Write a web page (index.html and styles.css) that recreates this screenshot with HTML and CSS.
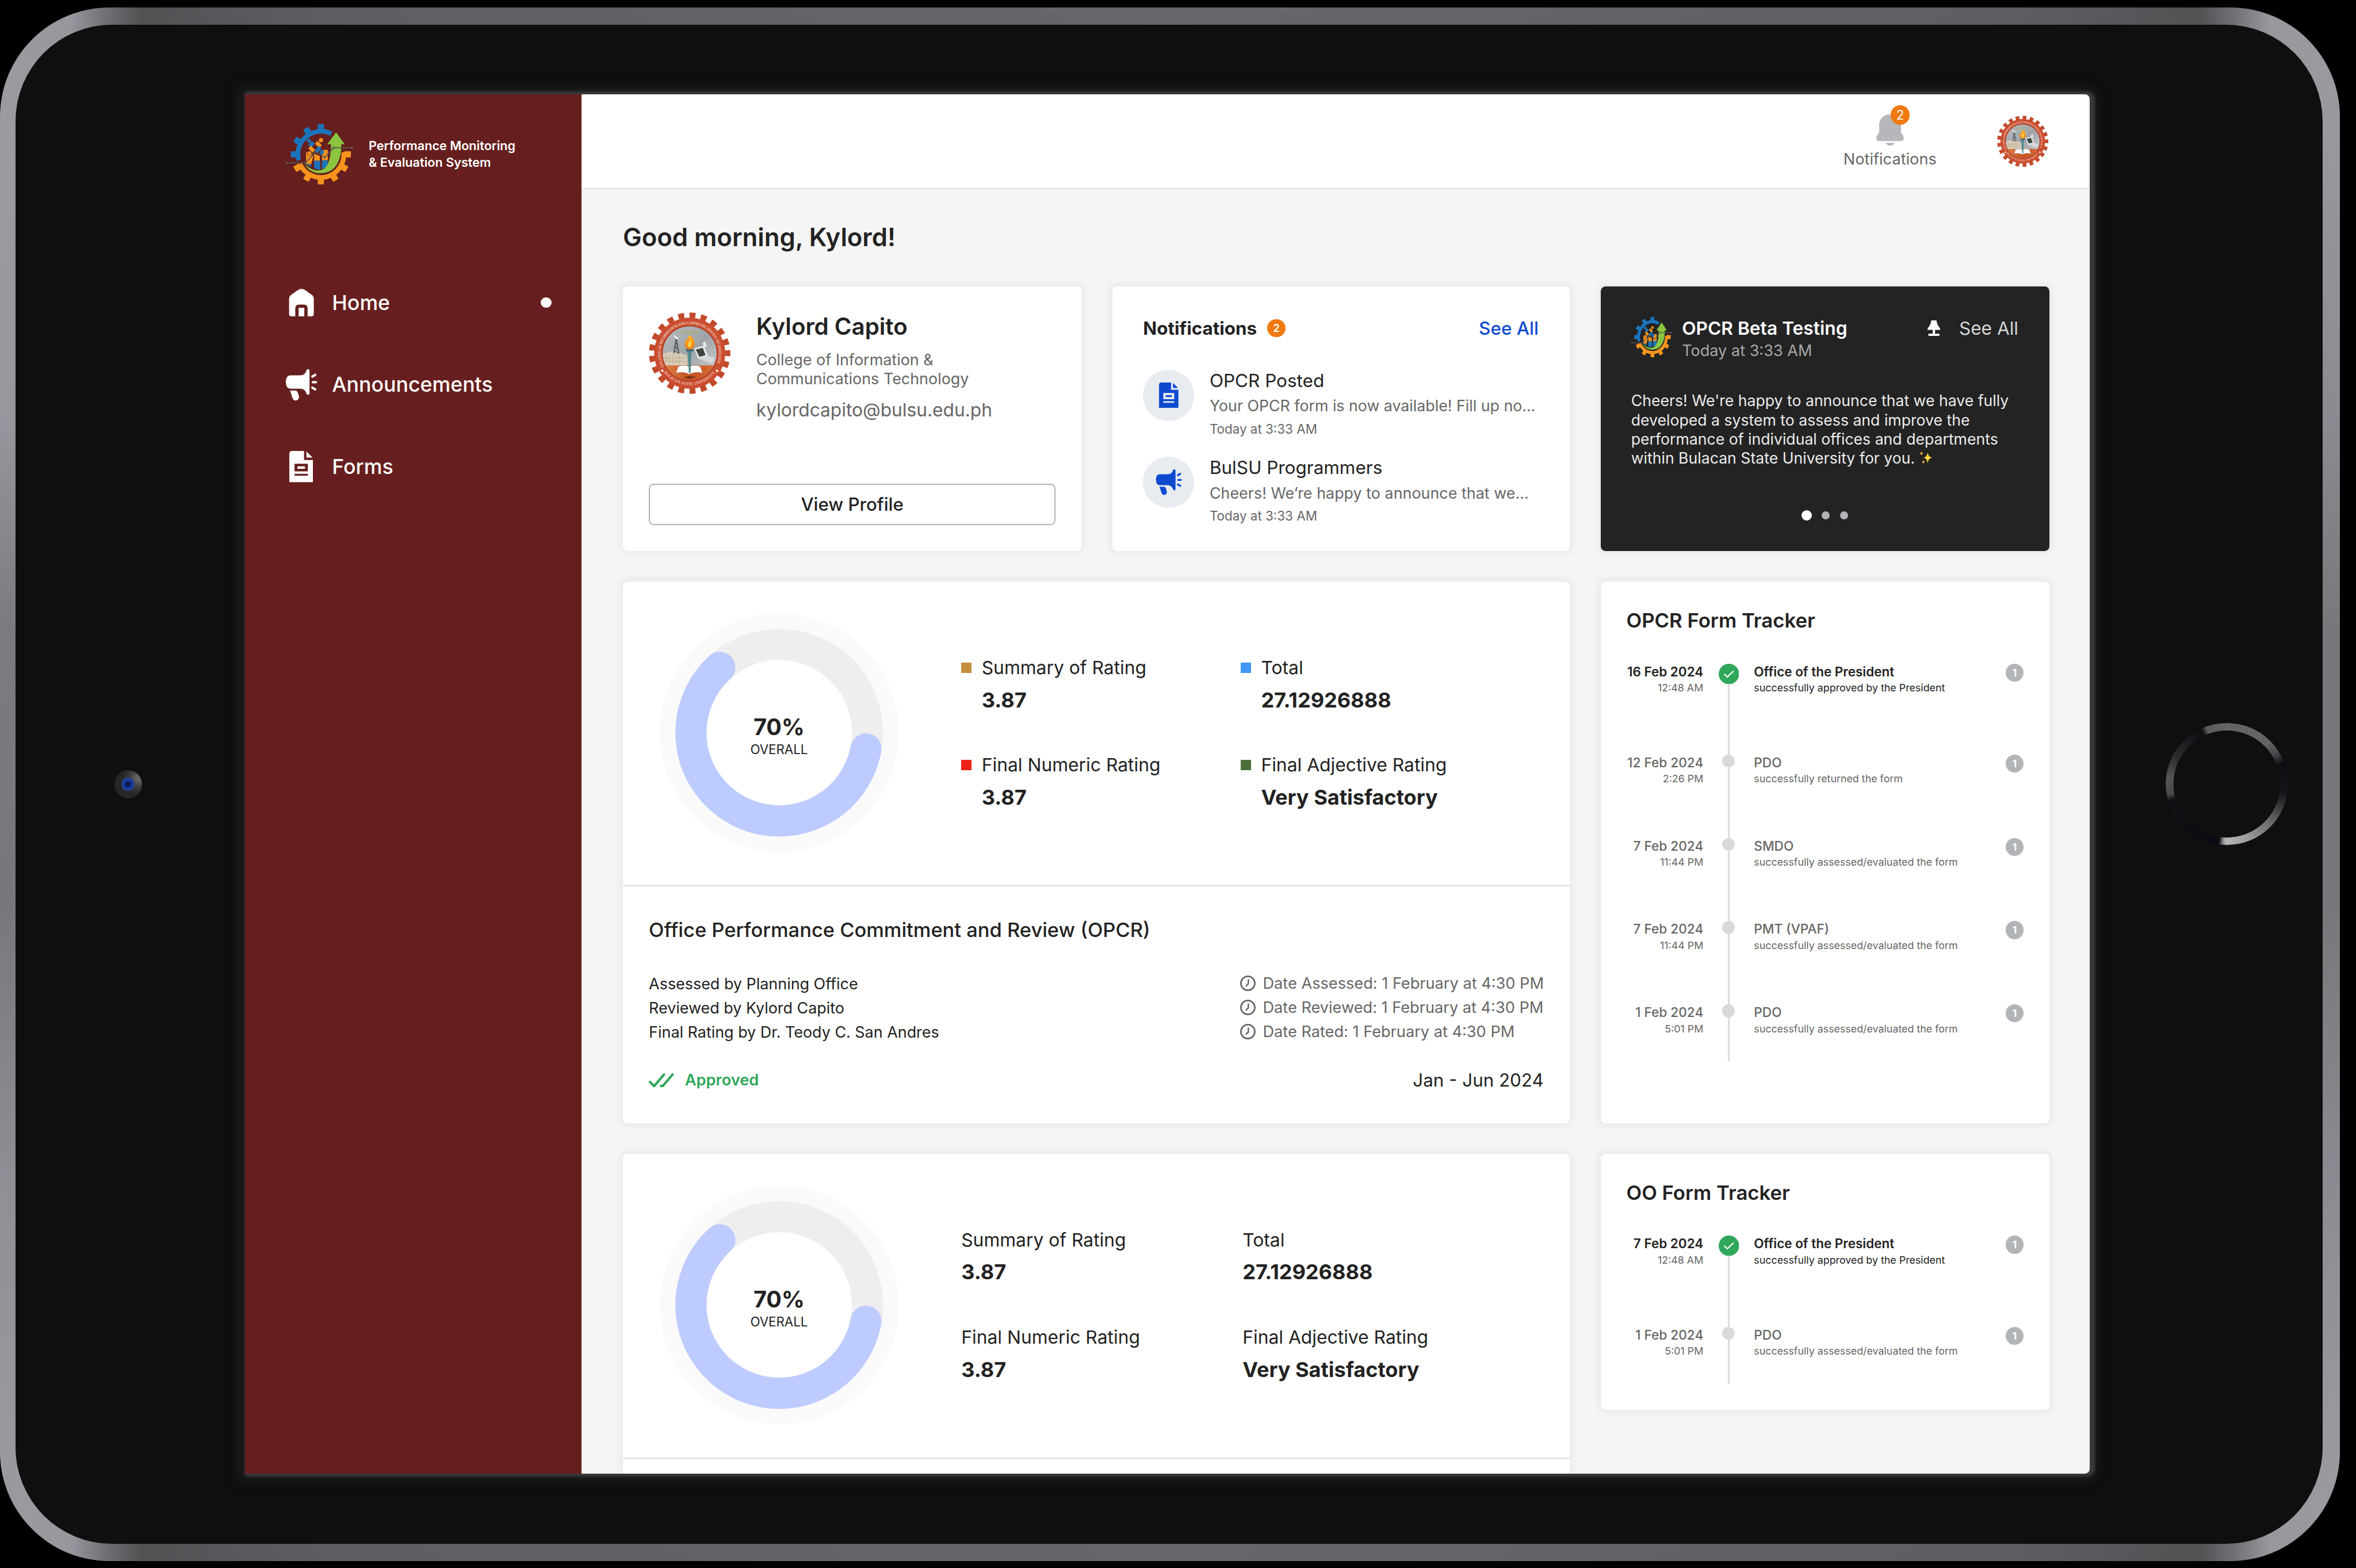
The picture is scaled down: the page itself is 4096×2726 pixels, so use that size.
FILE: index.html
```html
<!DOCTYPE html>
<html lang="en">
<head>
<meta charset="utf-8">
<title>Performance Monitoring &amp; Evaluation System</title>
<link rel="stylesheet" href="styles.css">
</head>
<body>
<svg class="defs" aria-hidden="true">
  <defs>
    <linearGradient id="sky" x1="0" y1="0" x2="1" y2="1"><stop offset="0" stop-color="#b9bcbf"/><stop offset=".5" stop-color="#9fa3a7"/><stop offset="1" stop-color="#d4d6d8"/></linearGradient>
    <linearGradient id="ground" x1="0" y1="0" x2="1" y2="0"><stop offset="0" stop-color="#e08a4c"/><stop offset=".5" stop-color="#c8501f"/><stop offset="1" stop-color="#d9713a"/></linearGradient>
    <linearGradient id="flame" x1="0" y1="0" x2="0" y2="1"><stop offset="0" stop-color="#fbb62a"/><stop offset="1" stop-color="#f07a12"/></linearGradient>
    <path id="arc-top" d="M36.900 133.100 A71.300 71.300 0 1 1 163.100 133.100"/>
    <path id="arc-bottom" d="M33 140 A78 78 0 0 0 167 140"/>
    <clipPath id="disc"><circle cx="100" cy="100" r="66"/></clipPath>
    <rect id="tooth" x="67.1" y="0" width="13" height="14" rx="1"/>
  </defs>
  <symbol id="i-logo" viewBox="0 0 142 127" preserveAspectRatio="none">
    <g fill="#1b75bc"><use href="#tooth"/><use href="#tooth" transform="rotate(-30 73.6 63.3)"/><use href="#tooth" transform="rotate(-60 73.6 63.3)"/><use href="#tooth" transform="rotate(-90 73.6 63.3)"/></g>
    <g fill="#f7941e"><use href="#tooth" transform="rotate(-120 73.6 63.3)"/><use href="#tooth" transform="rotate(-150 73.6 63.3)"/><use href="#tooth" transform="rotate(180 73.6 63.3)"/><use href="#tooth" transform="rotate(150 73.6 63.3)"/><use href="#tooth" transform="rotate(120 73.6 63.3)"/><use href="#tooth" transform="rotate(90 73.6 63.3)"/></g>
    <path d="M27 76 A48.5 48.5 0 0 1 95.6 20" fill="none" stroke="#1b75bc" stroke-width="10"/>
    <path d="M121.9 59 A48.5 48.5 0 0 1 29.6 84" fill="none" stroke="#f7941e" stroke-width="10"/>
    <path fill="#f7941e" d="M42.5 59h10.8l4 10-4 15H42.5zM59.5 62l12 5v10h-12zM76 66l3-12h9.2v22H76z"/>
    <path fill="#1b75bc" d="M42.5 84h10.8v6zM59.5 77h12.7v19l-12.7-3zM76 76h12.2v12L76 95z"/>
    <path d="M58 38 50 47" stroke="#1b75bc" stroke-width="8"/>
    <path d="M64 38l9 9M50 48l9 9" stroke="#f7941e" stroke-width="8"/>
    <path d="M72 48l-9 11" stroke="#1b75bc" stroke-width="8"/>
    <circle cx="48.6" cy="35" r="4.2" fill="#1b75bc"/><circle cx="74" cy="33.5" r="4.4" fill="#f7941e"/><circle cx="49.5" cy="61" r="4.4" fill="#f7941e" stroke="#70331d"/><circle cx="76" cy="58.5" r="4.4" fill="#1b75bc"/>
    <path fill="#8bc53f" d="M105.7 17 123.6 42h-7C117 78 104 103 73 103 57 103 45 95 40 84c10 10 22 14 32 13 16-2 23-23 23-55h-7.7z"/>
    <path d="M1.4 81.3H41l21.8-23.7 18.8 12 18.9-20.2H140" fill="none" stroke="#5f5755" stroke-width="2.2"/>
    <g fill="#5f5755"><circle cx="2.4" cy="81.3" r="2.4"/><circle cx="41" cy="81.3" r="2.4"/><circle cx="81.6" cy="69.7" r="2.4"/><circle cx="100.5" cy="49.4" r="2.6"/><circle cx="139.4" cy="49.4" r="2.4"/></g>
  </symbol>
  <symbol id="i-seal" viewBox="0 0 200 200">
    <circle cx="100" cy="100" r="92" fill="none" stroke="#c24a2c" stroke-width="15" pathLength="42" stroke-dasharray="1.050 .950" stroke-dashoffset=".525"/>
    <circle cx="100" cy="100" r="87" fill="#cb4e30"/>
    <circle cx="100" cy="100" r="68" fill="#a83a20"/>
    <circle cx="100" cy="100" r="66" fill="url(#sky)"/>
    <g clip-path="url(#disc)">
      <path fill="#d8cdb9" d="M34 102l20-6 24 4 16 6v28H34z"/>
      <path stroke="#b9a98d" stroke-width="1.4" d="M42 104v22M50 104v22M58 104v22M66 104v22M74 106v20M36 112h56M36 120h56"/>
      <path fill="url(#ground)" d="M30 130h140v50H30z"/>
    </g>
    <path stroke="#3c4046" stroke-width="1.8" fill="none" d="M67 62l-6 40M67 62l7 40M64 74l6 6M63 84l8 8M62 94l10 6M65 70h4M63 84h8"/>
    <path fill="#eceded" stroke="#8d9195" stroke-width=".8" d="M58 54l16 8-4 5q-9-3-12-13z"/>
    <path stroke="#a8b13b" stroke-width="1.8" d="M76 49h46"/>
    <path fill="#e9eaec" d="M111 88l24-6 10 25-24 7z"/><path fill="#3d453f" d="M115 91l17-4 7 18-15 4z"/>
    <path fill="#d5d7da" d="M121 114l24-7 17 4-6 13-17-4z"/><path fill="#e6e8ea" d="M132 76l6-6 4 14-7 2z"/>
    <path fill="#fff" stroke="#8c3a1d" stroke-width=".8" d="M72 132q14-5 27 0 13-5 27 0l6 17q-18-5-33 3-15-8-33-3z"/>
    <path fill="#4f8a8c" d="M93 92h14l-3 12-2 45h-4l-2-45z"/><path fill="#37686c" d="M91 90h18v5H91z"/>
    <path fill="url(#flame)" d="M88 76c0-9 10-11 9-20 9 2 14 9 15 17 2 8-3 17-12 18-7 0-12-6-12-15z"/>
    <path fill="#fbd04a" d="M95 79c0-6 6-7 5-12 6 4 7 17 0 19-3 0-5-3-5-7z"/>
    <circle cx="33" cy="143" r="3" fill="#fff"/><circle cx="167" cy="143" r="3" fill="#fff"/>
  </symbol>
  <symbol id="i-home" viewBox="0 0 68 68">
    <path fill="currentColor" d="M34 5q4 0 8 3l14 10q4 3 4 8v32q0 5-5 5h-8V46q0-8-8-8H29q-8 0-8 8v17h-8q-5 0-5-5V26q0-5 4-8L26 8q4-3 8-3z"/>
    <path fill="currentColor" d="M28 45h12v18H28z"/>
  </symbol>
  <symbol id="i-horn" viewBox="0 0 68 68">
    <path fill="currentColor" d="M11 14h19q11 0 14-9 1-4 4-4 3 0 3 4v46q0 4-3 4-3 0-4-4-3-9-13-9H11q-10 0-10-14T11 14z"/>
    <path fill="currentColor" d="M10 46h11q4 0 6 6l2 7q0 7-7 8-5 0-7-6z"/>
    <path fill="none" stroke="currentColor" stroke-width="5" stroke-linecap="round" d="M57 16.500l6-3.500M58 28.500h6.500M57 40l6 3.500"/>
  </symbol>
  <symbol id="i-doc" viewBox="0 0 50 66">
    <path fill="currentColor" fill-rule="evenodd" d="M6 0h25v19h19v41q0 6-1 6H0V6q0-6 6-6zM11 27v16h28V27zm0 21v4h28v-4z"/>
    <path fill="currentColor" d="M36 1l13 13H36zM17 32.500h16v5H17z"/>
  </symbol>
  <symbol id="i-bell" viewBox="0 0 58 66">
    <path fill="currentColor" d="M29 0c13 0 23 9 23 22v14c0 5 6 8 6 14 0 3-2 6-5 6H5c-3 0-5-3-5-6 0-6 6-9 6-14V22C6 9 16 0 29 0zM20 59.500h18q-2 6.500-9 6.500t-9-6.500z"/>
  </symbol>
  <symbol id="i-lamp" viewBox="0 0 27 33">
    <path fill="#fff" d="M8 0h11q1 9 7 16 1 1 1 4H16v8h9v5H2v-5h9v-8H0q0-3 1-4Q7 9 8 0z"/>
  </symbol>
  <symbol id="i-sparkle" viewBox="0 0 30 30">
    <path fill="#ffd83b" d="M18 3q1 11 11 12-10 1-11 13-1-12-10-13 9-1 10-12z"/>
    <path fill="#f6b73c" d="M4 0q.6 5 4.500 5.500Q4.600 6 4 11 3.400 6 0 5.500 3.400 5 4 0zM8.500 20q.5 4 4 4.500-3.500.5-4 5-.5-4.500-4-5 3.500-.5 4-4.500z"/>
  </symbol>
  <symbol id="i-clock" viewBox="0 0 35 35">
    <circle cx="17.500" cy="17.500" r="14.600" fill="none" stroke="#666" stroke-width="3.400"/>
    <path fill="none" stroke="#666" stroke-width="3" stroke-linecap="round" stroke-linejoin="round" d="M18.500 10v8.500l-4.500 4.500"/>
  </symbol>
  <symbol id="i-checks" viewBox="0 0 53 30">
    <path fill="none" stroke="#2fa65a" stroke-width="5" stroke-linecap="round" stroke-linejoin="round" d="M2.500 18l8.500 9L32 2.500M25.500 26.500l3.500.5L50 2.500"/>
  </symbol>
  <symbol id="i-tick" viewBox="0 0 43 43">
    <circle cx="21.500" cy="21.500" r="21.500" fill="#30a75b"/>
    <path fill="none" stroke="#fff" stroke-width="2.600" stroke-linecap="round" stroke-linejoin="round" d="M12.500 22l5.500 6 12.500-12"/>
  </symbol>
  <symbol id="i-donut" viewBox="0 0 503 503">
    <circle cx="251.500" cy="251.500" r="251.500" fill="#fafafa"/>
    <circle cx="251.500" cy="251.500" r="153" fill="#fff"/>
    <circle cx="251.500" cy="251.500" r="185.800" fill="none" stroke="#eeeeee" stroke-width="65.500"/>
    <path fill="none" stroke="#becbff" stroke-width="65.500" stroke-linecap="round" d="M434.100 285.700A185.800 185.800 0 1 1 126.500 114"/>
  </symbol>
</svg>

<div class="stage">
  <div class="device">
    <div class="bezel">
      <div class="camera"><div class="lens"></div></div>

      <main class="screen">
        <aside class="sidebar">
          <div class="brand">
            <svg class="brand-logo"><use href="#i-logo"/></svg>
            <div class="brand-name">Performance Monitoring<br>&amp; Evaluation System</div>
          </div>
          <nav class="nav">
            <a class="nav-item"><svg class="nav-icon"><use href="#i-home"/></svg><span>Home</span><i class="nav-dot"></i></a>
            <a class="nav-item"><svg class="nav-icon"><use href="#i-horn"/></svg><span>Announcements</span></a>
            <a class="nav-item"><svg class="nav-icon nav-doc"><use href="#i-doc"/></svg><span>Forms</span></a>
          </nav>
        </aside>

        <div class="main">
          <header class="topbar">
            <div class="bell-box">
              <svg class="bell"><use href="#i-bell"/></svg>
              <span class="bell-count">2</span>
              <span class="bell-label">Notifications</span>
            </div>
            <svg class="avatar-small" viewBox="0 0 200 200">
              <use href="#i-seal"/>
              <text class="seal-text"><textPath href="#arc-top" textLength="284">COLLEGE OF INFORMATION AND COMMUNICATIONS TECHNOLOGY</textPath></text>
              <text class="seal-text"><textPath href="#arc-bottom" startOffset="8" textLength="144">BULACAN STATE UNIVERSITY</textPath></text>
            </svg>
          </header>

          <div class="content">
            <h1 class="greeting">Good morning, Kylord!</h1>
            <div class="grid">
              <section class="card profile">
                <div class="profile-top">
                  <svg class="avatar" viewBox="0 0 200 200">
                    <use href="#i-seal"/>
                    <text x="100" y="162" text-anchor="middle" class="seal-year">•2001•</text>
                    <text class="seal-text"><textPath href="#arc-top" textLength="284">COLLEGE OF INFORMATION AND COMMUNICATIONS TECHNOLOGY</textPath></text>
                    <text class="seal-text"><textPath href="#arc-bottom" startOffset="8" textLength="144">BULACAN STATE UNIVERSITY</textPath></text>
                  </svg>
                  <div>
                    <h2 class="profile-name">Kylord Capito</h2>
                    <p class="profile-dept">College of Information &amp;<br>Communications Technology</p>
                    <p class="profile-mail">kylordcapito@bulsu.edu.ph</p>
                  </div>
                </div>
                <button class="profile-button">View Profile</button>
              </section>

              <section class="card notices">
                <div class="notices-head">
                  <h3>Notifications</h3><span class="count">2</span><a class="link">See All</a>
                </div>
                <div class="notice">
                  <span class="notice-icon"><svg class="notice-doc"><use href="#i-doc"/></svg></span>
                  <div>
                    <div class="notice-title">OPCR Posted</div>
                    <div class="notice-body">Your OPCR form is now available! Fill up no...</div>
                    <div class="notice-time">Today at 3:33 AM</div>
                  </div>
                </div>
                <div class="notice">
                  <span class="notice-icon"><svg class="notice-horn"><use href="#i-horn"/></svg></span>
                  <div>
                    <div class="notice-title">BulSU Programmers</div>
                    <div class="notice-body wide">Cheers! We’re happy to announce that we...</div>
                    <div class="notice-time">Today at 3:33 AM</div>
                  </div>
                </div>
              </section>

              <section class="card promo">
                <div class="promo-head">
                  <svg class="promo-logo"><use href="#i-logo"/></svg>
                  <div>
                    <h3>OPCR Beta Testing</h3>
                    <div class="promo-time">Today at 3:33 AM</div>
                  </div>
                  <div class="promo-actions"><svg class="lamp"><use href="#i-lamp"/></svg><a>See All</a></div>
                </div>
                <p class="promo-body">Cheers! We're happy to announce that we have fully<br>developed a system to assess and improve the<br>performance of individual offices and departments<br>within Bulacan State University for you. <svg class="sparkle"><use href="#i-sparkle"/></svg></p>
                <div class="pager"><i class="on"></i><i></i><i></i></div>
              </section>

              <section class="card rating">
                <div class="summary">
                  <div class="donut">
                    <svg class="donut-ring"><use href="#i-donut"/></svg>
                    <div class="donut-label"><b>70%</b><span>OVERALL</span></div>
                  </div>
                  <dl class="metrics marked">
                    <div><dt><i class="gold"></i>Summary of Rating</dt><dd>3.87</dd></div>
                    <div><dt><i class="blue"></i>Total</dt><dd>27.12926888</dd></div>
                    <div><dt><i class="red"></i>Final Numeric Rating</dt><dd>3.87</dd></div>
                    <div><dt><i class="green"></i>Final Adjective Rating</dt><dd>Very Satisfactory</dd></div>
                  </dl>
                </div>
                <div class="review">
                  <h3>Office Performance Commitment and Review (OPCR)</h3>
                  <div class="review-row"><span>Assessed by Planning Office</span><span class="date"><svg class="clock"><use href="#i-clock"/></svg>Date Assessed: 1 February at 4:30 PM</span></div>
                  <div class="review-row"><span>Reviewed by Kylord Capito</span><span class="date"><svg class="clock"><use href="#i-clock"/></svg>Date Reviewed: 1 February at 4:30 PM</span></div>
                  <div class="review-row"><span>Final Rating by Dr. Teody C. San Andres</span><span class="date"><svg class="clock"><use href="#i-clock"/></svg>Date Rated: 1 February at 4:30 PM</span></div>
                  <div class="review-foot">
                    <span class="approved"><svg class="checks"><use href="#i-checks"/></svg>Approved</span>
                    <span class="period">Jan - Jun 2024</span>
                  </div>
                </div>
              </section>

              <section class="card tracker">
                <h3>OPCR Form Tracker</h3>
                <div class="step current">
                  <div class="when"><b>16 Feb 2024</b><span>12:48 AM</span></div>
                  <div class="rail"><svg class="tick"><use href="#i-tick"/></svg></div>
                  <div class="what"><b>Office of the President</b><span>successfully approved by the President</span></div>
                  <span class="num">1</span>
                </div>
                <div class="step">
                  <div class="when"><b>12 Feb 2024</b><span>2:26 PM</span></div>
                  <div class="rail"><i></i></div>
                  <div class="what"><b>PDO</b><span>successfully returned the form</span></div>
                  <span class="num">1</span>
                </div>
                <div class="step">
                  <div class="when"><b>7 Feb 2024</b><span>11:44 PM</span></div>
                  <div class="rail"><i></i></div>
                  <div class="what"><b>SMDO</b><span>successfully assessed/evaluated the form</span></div>
                  <span class="num">1</span>
                </div>
                <div class="step">
                  <div class="when"><b>7 Feb 2024</b><span>11:44 PM</span></div>
                  <div class="rail"><i></i></div>
                  <div class="what"><b>PMT (VPAF)</b><span>successfully assessed/evaluated the form</span></div>
                  <span class="num">1</span>
                </div>
                <div class="step last">
                  <div class="when"><b>1 Feb 2024</b><span>5:01 PM</span></div>
                  <div class="rail"><i></i></div>
                  <div class="what"><b>PDO</b><span>successfully assessed/evaluated the form</span></div>
                  <span class="num">1</span>
                </div>
              </section>

              <section class="card rating">
                <div class="summary">
                  <div class="donut">
                    <svg class="donut-ring"><use href="#i-donut"/></svg>
                    <div class="donut-label"><b>70%</b><span>OVERALL</span></div>
                  </div>
                  <dl class="metrics">
                    <div><dt>Summary of Rating</dt><dd>3.87</dd></div>
                    <div><dt>Total</dt><dd>27.12926888</dd></div>
                    <div><dt>Final Numeric Rating</dt><dd>3.87</dd></div>
                    <div><dt>Final Adjective Rating</dt><dd>Very Satisfactory</dd></div>
                  </dl>
                </div>
                <div class="review"></div>
              </section>

              <section class="card tracker short">
                <h3>OO Form Tracker</h3>
                <div class="step current">
                  <div class="when"><b>7 Feb 2024</b><span>12:48 AM</span></div>
                  <div class="rail"><svg class="tick"><use href="#i-tick"/></svg></div>
                  <div class="what"><b>Office of the President</b><span>successfully approved by the President</span></div>
                  <span class="num">1</span>
                </div>
                <div class="step last">
                  <div class="when"><b>1 Feb 2024</b><span>5:01 PM</span></div>
                  <div class="rail"><i></i></div>
                  <div class="what"><b>PDO</b><span>successfully assessed/evaluated the form</span></div>
                  <span class="num">1</span>
                </div>
              </section>
            </div>
          </div>
        </div>
      </main>

      <div class="home-button"></div>
    </div>
  </div>
</div>
</body>
</html>
```
FILE: styles.css
```css
* { box-sizing: border-box; margin: 0; padding: 0; }
html, body { background: #000; overflow: hidden; }
body { font-family: "Inter", "Liberation Sans", sans-serif; color: #222; }
svg { display: block; flex: none; }
i { display: block; font-style: normal; }
.defs { position: absolute; width: 0; height: 0; }

/* Tablet */
.stage { width: 4959px; height: 3300px; padding-top: 16px; zoom: 0.826; overflow: hidden; }
.device {
  width: 4925px; height: 3270px; padding: 36px 37px 37px 33px; border-radius: 230px;
  background:
    linear-gradient(to bottom, transparent 3%, #9a9ba1 9%, #97989e 26%, #7a7b7f 40%, #77787b 58%, #8f9096 76%, #97989e 90%, transparent 97%) left / 34px 100% no-repeat,
    linear-gradient(to bottom, transparent 3%, #97989e 9%, #8b8c92 26%, #77787b 40%, #77787b 58%, #8b8c92 76%, #97989e 90%, transparent 97%) right / 37px 100% no-repeat,
    linear-gradient(to right, #9a9ba1 0, #97989e 3%, #707174 4.500%, #505254 6%, #5c5e61 14%, #66676a 50%, #5c5e61 86%, #505254 94%, #707174 95.500%, #97989e 97%, #9a9ba1 100%);
}
.bezel { display: flex; align-items: center; height: 100%; border-radius: 203px; background: #0f0f0f; }
.camera {
  display: flex; align-items: center; justify-content: center;
  width: 58px; height: 60px; margin: 0 217.5px 0 207.5px; border-radius: 50%;
  background: radial-gradient(circle at 85% 30%, #6e6e6e 0, #3c3c3c 28%, #262626 50%);
}
.lens { width: 28px; height: 28px; border-radius: 50%; background: radial-gradient(circle, #081a5c 0 22%, #1c3f9c 48%, #2a4488 100%); }
.home-button {
  width: 257px; height: 257px; margin-left: 160.500px; border-radius: 50%;
  background: conic-gradient(#636466 0deg, #636466 45deg, #4a4a4e 58deg, #0c0c12 70deg, #14141a 98deg, #2c2c2e 108deg, #6c6c6e 132deg, #9a9a9a 158deg, #b4b4b4 180deg, #a0a0a0 183deg, #0a0a14 188deg, #0f0f14 240deg, #121216 254deg, #4a4a4a 260deg, #545454 276deg, #2c2c2e 298deg, #121218 328deg, #0f0f0f 335deg, #5a5b5d 340deg, #636466 360deg);
  -webkit-mask: radial-gradient(circle, transparent 112px, #000 113px);
  mask: radial-gradient(circle, transparent 112px, #000 113px);
}
.screen {
  display: grid; grid-template-columns: 708.5px 1fr; flex: none;
  width: 3882px; height: 2903.5px; border-radius: 0 10px 10px 0; background: #f5f5f5;
  box-shadow: 5px 0 5px 5px #393a3b, 0 0 24px 12px #1f2020;
}

/* Sidebar */
.sidebar { background: #661f1e; padding: 62px 64px 0 84px; color: #fff; }
.brand { display: flex; align-items: center; height: 128px; margin-left: 2px; }
.brand-logo { width: 142px; height: 127px; margin-right: 32px; }
.brand-name { font-size: 26.2px; line-height: 35px; font-weight: 600; white-space: nowrap; }
.nav { margin-top: 162px; }
.nav-item { display: flex; align-items: center; height: 172.6px; font-size: 43.2px; line-height: 50px; font-weight: 450; }
.nav-icon { width: 68px; height: 68px; margin-right: 31px; }
.nav-doc { width: 50px; height: 66px; margin: 0 40px 0 9px; }
.nav-dot { width: 22px; height: 22px; border-radius: 50%; background: #fff; margin-left: auto; }

/* Header */
.main { display: flex; flex-direction: column; height: 2903.5px; overflow: hidden; border-radius: 0 10px 10px 0; }
.topbar { display: flex; justify-content: flex-end; flex: none; height: 200px; padding-right: 86px; background: #fff; border-bottom: 3px solid #e3e3e3; border-radius: 0 10px 0 0; }
.bell-box { position: relative; display: flex; flex-direction: column; align-items: center; padding-top: 42px; margin-right: 128px; }
.bell { width: 58px; height: 66px; color: #b5b7ba; }
.bell-label { margin-top: 8.5px; font-size: 32.9px; line-height: 40px; color: #666; }
.bell-count { position: absolute; top: 23px; left: 99px; width: 41px; height: 41px; border-radius: 50%; background: #f07a10; color: #fff; font-size: 27px; line-height: 41px; text-align: center; }
.avatar-small { width: 108px; height: 108px; margin-top: 45px; }
.seal-text { font: 400 9.5px "Liberation Serif", serif; fill: #fbe9e2; }
.seal-year { font: 700 10px "Liberation Serif", serif; fill: #2a160e; }

/* Content */
.content { padding: 70px 85px 0 86.8px; }
.greeting { font-size: 52.8px; line-height: 64px; font-weight: 600; margin-bottom: 70px; }
.grid { display: grid; grid-template-columns: 965px 961.5px 944px; grid-template-rows: 557.5px auto auto; column-gap: 65.7px; row-gap: 64px; align-items: stretch; }
.card { background: #fff; border-radius: 10px; box-shadow: 0 0 14px 5px rgba(0, 0, 0, .05); }

.profile { display: flex; flex-direction: column; padding: 54.5px; }
.profile-top { display: flex; white-space: nowrap; }
.avatar { width: 172px; height: 172px; margin-right: 54px; }
.profile-name { font-size: 48.8px; line-height: 60px; font-weight: 600; }
.profile-dept { margin-top: 19.7px; font-size: 32.6px; line-height: 40.6px; color: #666; }
.profile-mail { margin-top: 21px; font-size: 38.4px; line-height: 48px; color: #666; }
.profile-button { margin-top: auto; height: 88px; border: 3px solid #b2b2b2; border-radius: 10px; background: #fff; font: 450 37.8px/46px "Inter", sans-serif; color: #222; }

.notices { padding: 65px 65px 0 64px; }
.notices-head { display: flex; align-items: center; height: 46px; line-height: 46px; margin-bottom: 64.5px; }
.notices-head h3 { font-size: 38px; font-weight: 650; }
.count { width: 38.6px; height: 38.6px; margin-left: 22px; border-radius: 50%; background: #f07a10; color: #fff; font-size: 22px; line-height: 38.6px; font-weight: 600; text-align: center; }
.link { margin-left: auto; font-size: 38.1px; font-weight: 450; color: #0d4ad0; }
.notice { display: flex; height: 142px; margin-bottom: 41.3px; white-space: nowrap; }
.notice-icon { display: flex; align-items: center; justify-content: center; width: 107.5px; height: 107.5px; margin-right: 32.500px; border-radius: 50%; background: #e8ebf0; color: #0d4ad0; flex: none; }
.notice-doc { width: 41px; height: 54px; }
.notice-horn { width: 56px; height: 56px; }
.notice-title { font-size: 38.1px; line-height: 46px; font-weight: 400; }
.notice-body { margin-top: 10.3px; font-size: 32.4px; line-height: 40px; color: #666; }
.notice-body.wide { letter-spacing: .1px; }
.notice-time { margin-top: 11.7px; font-size: 27.1px; line-height: 34px; color: #666; }

.promo { display: flex; flex-direction: column; padding: 65px 65px 64px 64px; background: #232323; color: #fff; white-space: nowrap; }
.promo-head { display: flex; }
.promo-logo { width: 86px; height: 85px; margin: -1px 21px 0 0; }
.promo-head h3 { font-size: 38.4px; line-height: 46px; font-weight: 600; }
.promo-time { margin-top: 4.8px; font-size: 32.8px; line-height: 40px; color: #a9a9a9; }
.promo-actions { display: flex; align-items: center; gap: 40px; height: 46px; margin-left: auto; font-size: 38.2px; line-height: 46px; color: #d6d6d6; }
.lamp { width: 27px; height: 33px; }
.promo-body { margin-top: 65px; font-size: 32.25px; line-height: 40.4px; color: #ececec; }
.sparkle { display: inline-block; width: 29px; height: 28px; vertical-align: -1px; }
.pager { display: flex; align-items: center; justify-content: center; gap: 21px; height: 22px; margin-top: auto; }
.pager i { width: 17px; height: 17px; border-radius: 50%; background: #b0b2b5; }
.pager .on { width: 22px; height: 22px; background: #fff; }

/* Rating cards */
.rating { grid-column: span 2; white-space: nowrap; }
.summary { display: flex; height: 641.5px; padding: 66px 0 0 77px; border-bottom: 3.4px solid #dcdcdc; }
.donut { display: grid; width: 503px; height: 503px; }
.donut-ring { width: 503px; height: 503px; grid-area: 1 / 1; }
.donut-label { grid-area: 1 / 1; display: flex; flex-direction: column; align-items: center; padding-top: 212px; }
.donut-label b { font-size: 47.8px; line-height: 56px; font-weight: 680; }
.donut-label span { font-size: 27px; line-height: 34px; margin-top: 2.6px; }
.metrics { display: grid; grid-template-columns: 592px 592px; grid-auto-rows: 116.6px; row-gap: 88.1px; margin: 92.7px 0 0 132px; }
.metrics dt { display: flex; align-items: center; font-size: 38.5px; line-height: 46px; font-weight: 400; }
.metrics dd { margin-top: 18.6px; font-size: 43.7px; line-height: 52px; font-weight: 650; }
.metrics.marked { grid-template-columns: 588px 588px; }
.marked dt i { width: 22px; height: 22px; margin-right: 21px; }
.marked dd { padding-left: 43px; }
.gold { background: #c68f3f; }
.blue { background: #3f97f6; }
.red { background: #ee2218; }
.green { background: #4d6f38; }

.review { min-height: 498px; padding: 66.6px 54.5px 68px; }
.review h3 { font-size: 41.7px; line-height: 52px; font-weight: 500; margin-bottom: 60px; }
.review-row { display: flex; justify-content: space-between; font-size: 32.6px; line-height: 51px; }
.date { display: flex; align-items: center; width: 640px; font-size: 32.9px; color: #666; }
.clock { width: 35px; height: 35px; margin-right: 14px; }
.review-foot { display: flex; justify-content: space-between; align-items: center; height: 46px; margin-top: 53.4px; }
.approved { display: flex; align-items: center; font-size: 32.9px; line-height: 40px; font-weight: 600; color: #2fa65a; }
.checks { width: 53px; height: 30px; margin-right: 23px; }
.period { font-size: 37.9px; line-height: 46px; font-weight: 400; }

/* Trackers */
.tracker { padding: 56px 54px 54px; white-space: nowrap; }
.tracker h3 { font-size: 42px; line-height: 52px; font-weight: 600; margin-bottom: 64.5px; }
.short { height: 539px; }
.step { display: grid; grid-template-columns: 162px 106.6px 1fr auto; height: 175.3px; color: #666; }
.step.current { height: 191.6px; color: #222; }
.step.last { height: 120px; }
.when { text-align: right; }
.when b, .what b { display: block; font-size: 27.4px; line-height: 34px; font-weight: 450; }
.step.current b { font-weight: 600; font-size: 27.2px; }
.when span, .what span { display: block; margin-top: 4.1px; font-size: 21.6px; line-height: 27px; }
.when span { color: #666; }
.rail { display: flex; flex-direction: column; align-items: center; }
.rail::after { content: ""; flex: 1; width: 3px; background: #dcdcdc; }
.rail i { width: 27px; height: 27px; border-radius: 50%; background: #d9d9d9; }
.tick { width: 43px; height: 43px; }
.num { width: 37.6px; height: 37.6px; border-radius: 50%; background: #b2b4b7; color: #fff; font-size: 21px; line-height: 37.6px; font-weight: 700; text-align: center; }
```
